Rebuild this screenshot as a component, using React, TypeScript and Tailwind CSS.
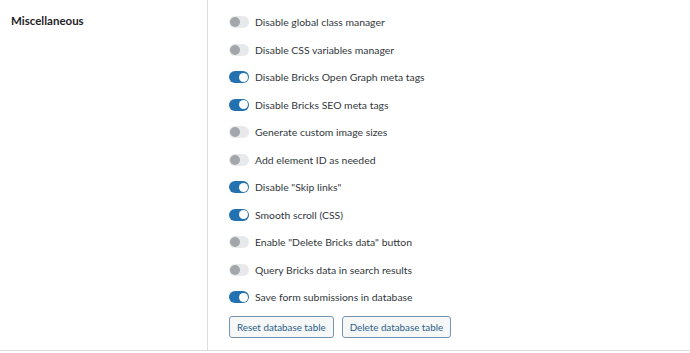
import React from 'react';

const options = [
  { label: 'Disable global class manager', on: false },
  { label: 'Disable CSS variables manager', on: false },
  { label: 'Disable Bricks Open Graph meta tags', on: true },
  { label: 'Disable Bricks SEO meta tags', on: true },
  { label: 'Generate custom image sizes', on: false },
  { label: 'Add element ID as needed', on: false },
  { label: 'Disable "Skip links"', on: true },
  { label: 'Smooth scroll (CSS)', on: true },
  { label: 'Enable "Delete Bricks data" button', on: false },
  { label: 'Query Bricks data in search results', on: false },
  { label: 'Save form submissions in database', on: true },
];

function Toggle({ on }: { on: boolean }) {
  return (
    <span
      className={
        on
          ? 'flex h-[12px] w-[20px] shrink-0 items-center justify-end rounded-full bg-[#2271b1] px-[1.5px]'
          : 'flex h-[12px] w-[20px] shrink-0 items-center justify-start rounded-full bg-[#e8e9ea] px-[1px]'
      }
    >
      <span
        className={
          on
            ? 'h-[9px] w-[9px] rounded-full bg-white'
            : 'h-[10px] w-[10px] rounded-full bg-[#a3a6aa]'
        }
      />
    </span>
  );
}

export default function App() {
  return (
    <div
      className="flex h-[353px] w-[690px] bg-white text-[#32373c]"
      style={{ fontFamily: 'Lato, "Open Sans", sans-serif' }}
    >
      <div className="flex h-[351px] w-full border-b border-[#dcdcde]">
        {/* Label column */}
        <div className="w-[208px] shrink-0 border-r border-[#dcdcde] pl-[11px] pt-[12px]">
          <h3 className="text-[11.5px] font-bold text-[#1d2327]">Miscellaneous</h3>
        </div>

        {/* Options */}
        <div className="flex flex-col pl-[21px] pt-[8.5px]">
          {options.map((o) => (
            <label key={o.label} className="flex h-[27.5px] items-center gap-[6px]">
              <Toggle on={o.on} />
              <span className="text-[10.4px] leading-none">{o.label}</span>
            </label>
          ))}
          <div className="mt-[5px] flex gap-[8px]">
            <button className="h-[22px] rounded-[3px] border border-[#7594b3] bg-[#f6f7f7] px-[7px] text-[9.8px] text-[#2c5f8a]">
              Reset database table
            </button>
            <button className="h-[22px] rounded-[3px] border border-[#7594b3] bg-[#f6f7f7] px-[7px] text-[9.8px] text-[#2c5f8a]">
              Delete database table
            </button>
          </div>
        </div>
      </div>
    </div>
  );
}
